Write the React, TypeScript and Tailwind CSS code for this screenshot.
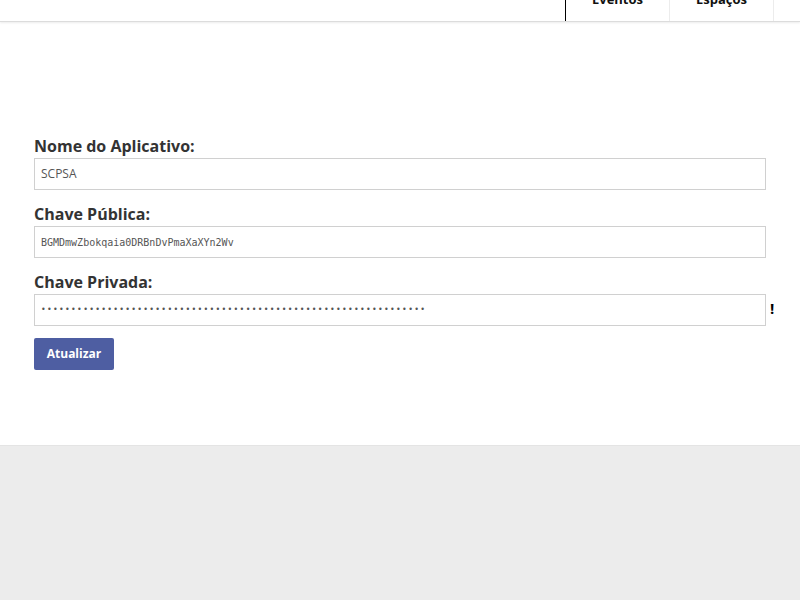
import React from "react";

export default function App() {
  const font = { fontFamily: '"Open Sans", "Noto Sans", sans-serif' };
  return (
    <div className="w-[800px] h-[600px] bg-[#ececec] flex flex-col" style={font}>
      <div className="h-[22px] bg-white border-b border-[#dcdcdc] shadow-[0_1px_2px_rgba(0,0,0,0.08)] flex justify-end overflow-hidden relative z-10">
        <div className="flex mr-[26px] h-[21px]">
          <div className="w-[105px] border-l border-black border-r border-r-[#ececec] flex justify-center">
            <span className="text-[13px] font-bold text-[#111] leading-none mt-[-7px]">Eventos</span>
          </div>
          <div className="w-[104px] border-r border-[#ececec] flex justify-center">
            <span className="text-[13px] font-bold text-[#111] leading-none mt-[-7px]">Espaços</span>
          </div>
        </div>
      </div>
      <div className="bg-white h-[424px] border-b border-[#e4e4e4] pt-[113px] px-[34px]">
        <div className="w-[732px] flex flex-col">
          <label className="text-[16px] font-bold text-[#333] leading-[22px]">Nome do Aplicativo:</label>
          <div className="mt-[1px] h-[32px] border border-[#d0d0d0] flex items-center px-[6px] text-[12px] text-[#555]">SCPSA</div>
          <label className="mt-[13px] text-[16px] font-bold text-[#333] leading-[22px]">Chave Pública:</label>
          <div className="mt-[1px] h-[32px] border border-[#d0d0d0] flex items-center px-[6px] text-[10px] text-[#555]" style={{ fontFamily: '"DejaVu Sans Mono", monospace' }}>BGMDmwZbokqaia0DRBnDvPmaXaXYn2Wv</div>
          <label className="mt-[13px] text-[16px] font-bold text-[#333] leading-[22px]">Chave Privada:</label>
          <div className="mt-[1px] relative">
            <div className="h-[32px] border border-[#d0d0d0] flex items-center px-[6px] text-[8px] text-[#555] tracking-[1.3px] overflow-hidden whitespace-nowrap" style={{ fontFamily: '"DejaVu Sans", sans-serif' }}>
              {"•".repeat(64)}
            </div>
            <span className="absolute left-[736px] top-[4px] text-[15px] font-bold text-black leading-[20px]">!</span>
          </div>
          <div className="mt-[12px]">
            <button className="w-[80px] h-[32px] bg-[#4e5ea2] rounded-[2px] text-white text-[12px] font-bold">Atualizar</button>
          </div>
        </div>
      </div>
    </div>
  );
}
